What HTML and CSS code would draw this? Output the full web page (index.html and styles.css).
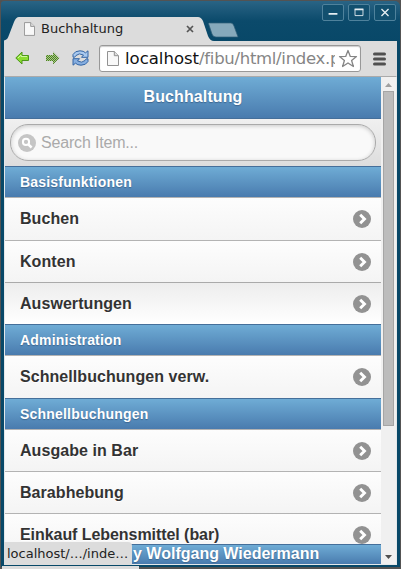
FILE: index.html
```html
<!DOCTYPE html>
<html lang="de">
<head>
<meta charset="utf-8">
<title>Buchhaltung</title>
<link rel="stylesheet" href="styles.css">
</head>
<body>
<svg width="0" height="0" class="defs">
  <symbol id="page" viewBox="0 0 12 15"><path d="M.5.5h6.800l4.200 4.200v9.800H.5z" fill="#f8f8f8" stroke="#929292"/><path d="M7.300.5v4.200h4.200" fill="#ddd" stroke="#929292"/></symbol>
  <symbol id="arrow" viewBox="0 0 18 18"><circle cx="9" cy="9" r="9" fill="#929292"/><path d="M7.200 4.700l4.300 4.300-4.300 4.300" fill="none" stroke="#fff" stroke-width="2.900"/></symbol>
</svg>
<div class="window">
  <header class="titlebar">
    <svg class="tabshape" width="240" height="26" viewBox="0 0 240 26"><path d="M0 26V23.500C3 23 4 21 5 18L10 5Q12 0 15 0H194Q197 0 199 4L204 19Q206 24 210 24H240V26z" fill="#dcdcdc"/><path d="M205 6h22q2 0 3 3l4 11h-22q-3 0-4-3l-3-9q-1-2 0-2z" fill="#86a9bb" stroke="#315f79" stroke-width=".7"/></svg>
    <div class="tab"><svg width="11" height="14"><use href="#page"/></svg><span>Buchhaltung</span><svg class="close" width="8" height="8" viewBox="0 0 8 8"><path d="M1 1l6 6M7 1L1 7" stroke="#555" stroke-width="1.700"/></svg></div>
    <div class="controls">
      <svg viewBox="0 0 22 17"><path d="M6 10h10" stroke="#e6eef2" stroke-width="2"/></svg>
      <svg viewBox="0 0 22 17"><path d="M6.500 5v7h9V5" fill="none" stroke="#e6eef2"/><path d="M6 5h10" stroke="#e6eef2" stroke-width="2"/></svg>
      <svg viewBox="0 0 22 17"><path d="M7 4.500l8 8M15 4.500l-8 8" stroke="#e6eef2" stroke-width="1.500"/></svg>
    </div>
  </header>
  <nav class="toolbar">
    <svg class="back" width="15" height="14" viewBox="0 0 15 14"><path d="M.8 7L7 1v3.500h6.500v5H7V13z" fill="#8bdc31" stroke="#4c961a"/><path d="M3 7l3-3v1.500h6" fill="none" stroke="#d0f6a0"/></svg>
    <svg class="forward" width="15" height="14" viewBox="0 0 15 14"><defs><pattern id="dots" width="2" height="2" patternUnits="userSpaceOnUse"><path d="M0 0h1v1H0zM1 1h1v1H1z" fill="#4d8123"/></pattern></defs><path d="M14 7L8 1v3H1v6h7v3z" fill="#a9c98a"/><path d="M14.500 7L8 .5V4H1v6h7v3.500z" fill="url(#dots)"/></svg>
    <svg class="reload" width="17" height="16" viewBox="0 0 17 16"><path d="M1 7.200V4.500Q3 .8 8 .8q3.500 0 5.500 2L16 .8v6.500H9.500L11.500 5Q7 2.500 4 5.500L2.700 7.200z" fill="#a9c9ef" stroke="#3465a4"/><path d="M16 8.800v2.700q-2 3.700-7 3.700-3.500 0-5.500-2L1 15.200V8.700h6.500L5.500 11q4.500 2.500 7.500-.5l1.300-1.700z" fill="#86aee0" stroke="#3465a4"/></svg>
    <div class="address"><svg width="12" height="15"><use href="#page"/></svg><div class="url">localhost<span>/fibu/html/index.p</span></div><svg class="star" width="20" height="19" viewBox="0 0 20 19"><path d="M10 1.500l2.300 5.900 6.200.2-4.900 3.900 1.800 6-5.400-3.500-5.400 3.500 1.800-6L1.500 7.600l6.200-.2z" fill="#fff" stroke="#858585" stroke-width="1.300" stroke-linejoin="round"/></svg></div>
    <svg class="menu" width="13" height="14" viewBox="0 0 13 14"><path d="M1.500 2h10M1.500 7h10M1.500 12h10" stroke="#505050" stroke-width="3" stroke-linecap="round"/></svg>
  </nav>
  <div class="viewport">
    <main class="page">
      <h1>Buchhaltung</h1>
      <div class="searchbar"><div class="search"><svg width="18" height="18" viewBox="0 0 18 18"><circle cx="9" cy="9" r="9" fill="#c5c5c5"/><circle cx="8" cy="7.900" r="3.100" fill="none" stroke="#fff" stroke-width="2"/><path d="M10.300 10.300l3.300 3.200" stroke="#fff" stroke-width="2.500"/></svg><span>Search Item...</span></div></div>
      <h2>Basisfunktionen</h2>
      <div class="item first">Buchen<svg><use href="#arrow"/></svg></div>
      <div class="item">Konten<svg><use href="#arrow"/></svg></div>
      <div class="item hover">Auswertungen<svg><use href="#arrow"/></svg></div>
      <h2>Administration</h2>
      <div class="item first">Schnellbuchungen verw.<svg><use href="#arrow"/></svg></div>
      <h2>Schnellbuchungen</h2>
      <div class="item">Ausgabe in Bar<svg><use href="#arrow"/></svg></div>
      <div class="item">Barabhebung<svg><use href="#arrow"/></svg></div>
      <div class="item last"><span>Einkauf Lebensmittel (bar)</span><svg><use href="#arrow"/></svg></div>
      <footer>y Wolfgang Wiedermann</footer>
    </main>
    <div class="scrollbar"><svg width="7" height="4" viewBox="0 0 7 4"><path d="M0 4L3.500 0 7 4z" fill="#a0a0a0"/></svg><div class="thumb"></div><svg class="down" width="7" height="4" viewBox="0 0 7 4"><path d="M0 0h7L3.500 4z" fill="#505050"/></svg></div>
  </div>
  <div class="status">localhost/…/inde…</div>
  <div class="status-edge"></div>
</div>
</body>
</html>
```
FILE: styles.css
```css
* { box-sizing: border-box; }
body { margin: 0; overflow: hidden; background: #535353; }
svg { display: block; flex: none; }
.defs { position: absolute; }
.window {
  position: relative;
  width: 401px;
  height: 569px;
  padding: 1px 4px 3px;
  border: solid #535353;
  border-width: 1px 1px 2px;
  border-radius: 4px 6px 0 0;
  background: linear-gradient(#2a6485 0, #0b4a6b 20px, #084868 42px, #084868);
  display: flex;
  flex-direction: column;
  font-family: "DejaVu Sans", sans-serif;
}
.titlebar { position: relative; height: 39px; flex: none; display: flex; margin: 0 -1px; }
.tabshape { position: absolute; left: 0; top: 15px; }
.tab { position: relative; display: flex; align-items: center; width: 196px; height: 26px; margin-top: 14px; padding-left: 20px; font-size: 13px; color: #222; }
.tab span { margin-left: 6px; margin-bottom: 1px; }
.close { margin-left: auto; margin-right: 6px; }
.controls { display: flex; gap: 4px; margin: 2px 1px 0 auto; }
.controls svg { width: 22px; height: 17px; border: 1px solid #4f829c; border-radius: 2px; background: #12506f; }
.toolbar { height: 35px; flex: none; display: flex; align-items: center; background: #dcdcdc; margin: 0 -1px; padding-left: 11px; }
.back, .forward, .reload { margin-bottom: 2px; }
.forward { margin-left: 15px; }
.reload { margin-left: 12px; }
.address { display: flex; align-items: center; width: 262px; height: 27px; margin-left: 10px; padding-left: 7px; border: 1px solid #989898; border-radius: 3px; background: #fff; box-shadow: inset 0 1px 1px #ccc; }
.url { width: 210px; margin-left: 6px; overflow: hidden; white-space: nowrap; font-size: 16.500px; line-height: 24px; color: #111; }
.url span { color: #858585; letter-spacing: -.3px; }
.star { margin-left: 3px; }
.menu { margin-left: 12px; }
.viewport { height: 489px; flex: none; display: flex; margin: 0 -1px; border: solid #e4e8ea; border-width: 1px; border-top-color: #aaa; }
.page { width: 376px; height: 487px; overflow: hidden; display: flex; flex-direction: column; font-family: "Liberation Sans", sans-serif; background: #f9f9f9; }
.page > * { flex: none; }
h1, h2, footer { margin: 0; color: #fff; font-weight: bold; background: linear-gradient(#6facd5, #497bae); text-shadow: 0 1px 1px #3e6790; }
h1 { height: 42px; border-bottom: 1px solid #456f9a; font-size: 16px; line-height: 39px; text-align: center; letter-spacing: .1px; }
h2 { height: 31px; border-top: 1px solid #456f9a; padding-left: 15px; font-size: 14px; line-height: 30px; letter-spacing: .2px; }
.searchbar { height: 47px; padding: 5px; background: linear-gradient(#f0f0f0, #ddd); }
.search { display: flex; align-items: center; height: 37px; padding-left: 7px; border: 1px solid #aaa; border-radius: 18px; background: #f9f9f9; box-shadow: inset 0 1px 4px rgba(0,0,0,.2); color: #aaa; font-size: 16px; letter-spacing: -.18px; }
.search span { margin-left: 5px; }
.item { display: flex; align-items: center; justify-content: space-between; height: 42px; padding: 0 10px 0 15px; border-top: 1px solid #b3b3b3; background: linear-gradient(#fdfdfd, #f4f4f4); color: #333; font-size: 16px; font-weight: bold; text-shadow: 0 1px 0 #fff; letter-spacing: .06px; }
.item svg { width: 18px; height: 18px; }
.item.first { height: 43px; }
.item.hover { background: linear-gradient(#ededed, #fff); border-color: #aaa; }
.item.last { height: 43px; margin-bottom: -12px; letter-spacing: -.06px; }
footer { position: relative; height: 20px; border-top: 1px solid #456f9a; padding-left: 128px; font-size: 16px; line-height: 18px; }
.scrollbar { width: 15px; display: flex; flex-direction: column; align-items: center; padding: 6px 0 5px; background: #f0f0f0; }
.thumb { width: 11px; height: 335px; margin-top: 4px; border: 1px solid #a5a5a5; background: #bcbcbc; }
.down { margin-top: auto; }
.status { position: absolute; left: 3px; top: 541px; width: 128px; height: 23px; padding-left: 3px; border-radius: 0 4px 0 0; background: #dcdcdc; color: #222; font-size: 13px; line-height: 23px; white-space: nowrap; }
.status-edge { position: absolute; left: 1px; top: 565px; width: 137px; height: 3px; background: #dcdcdc; }
```
